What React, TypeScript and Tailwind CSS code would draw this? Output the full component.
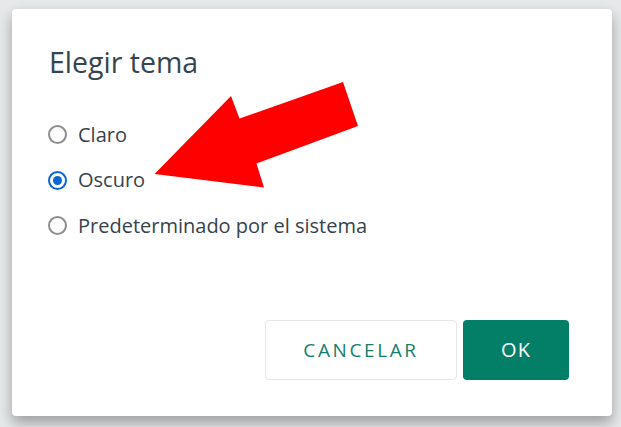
import React, { useState } from 'react';

const options = ['Claro', 'Oscuro', 'Predeterminado por el sistema'];

function Radio({ checked }: { checked: boolean }) {
  return checked ? (
    <span className="w-[19px] h-[19px] rounded-full border-[2.5px] border-[#0b66d6] flex items-center justify-center shrink-0">
      <span className="w-[9px] h-[9px] rounded-full bg-[#0b66d6]" />
    </span>
  ) : (
    <span className="w-[19px] h-[19px] rounded-full border-[2.5px] border-[#8d8d8d] shrink-0" />
  );
}

export default function App() {
  const [theme, setTheme] = useState('Oscuro');

  return (
    <div
      className="relative w-[621px] h-[427px] overflow-hidden bg-[#e6e9e9] pt-[9px] pl-[12px]"
      style={{ fontFamily: '"Open Sans", "Noto Sans", sans-serif' }}
    >
      {/* Dialog */}
      <div className="w-[600px] h-[407px] bg-white rounded-[4px] shadow-[0_7px_14px_rgba(0,0,0,0.32)] flex flex-col">
        <h2 className="pt-[35px] pl-[37px] text-[28.5px] leading-[36px] text-[#36454d]">Elegir tema</h2>

        <div className="mt-[32px] flex flex-col pl-[36px]">
          {options.map((opt) => (
            <button
              key={opt}
              onClick={() => setTheme(opt)}
              className="h-[45.5px] flex items-center gap-[11px] text-left"
            >
              <Radio checked={theme === opt} />
              <span className="text-[20px] text-[#36434b]">{opt}</span>
            </button>
          ))}
        </div>

        <div className="mt-auto flex justify-end gap-[6px] pr-[43px] pb-[36px]">
          <button className="w-[192px] h-[60px] rounded-[4px] border border-[#e6e6e6] bg-white text-[19px] tracking-[2.6px] text-[#177d6b]">
            CANCELAR
          </button>
          <button className="w-[106px] h-[60px] rounded-[4px] bg-[#037f67] text-[20px] tracking-[1px] text-white">
            OK
          </button>
        </div>
      </div>

      {/* Red arrow annotation */}
      <svg className="absolute left-0 top-0" width="621" height="427" viewBox="0 0 621 427">
        <polygon
          points="154.5,174 231,96 239.5,118.5 343,82 358,126 256.5,163.5 264,187.5"
          fill="#ff0000"
        />
      </svg>
    </div>
  );
}
